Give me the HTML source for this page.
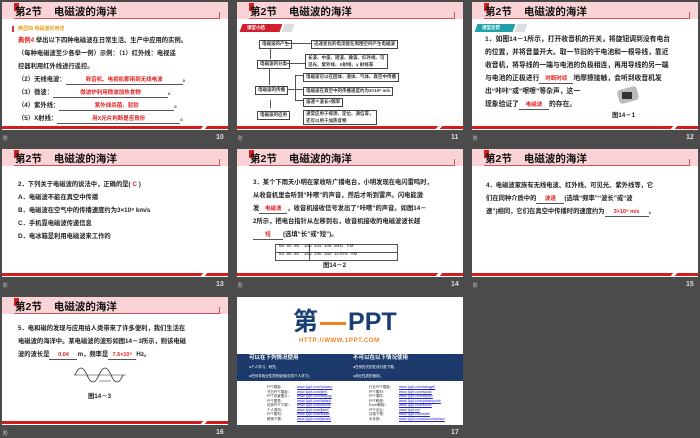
<!DOCTYPE html>
<html><head><meta charset="utf-8"><style>
*{margin:0;padding:0;box-sizing:border-box}
body{width:700px;height:438px;background:#4b4b4b;position:relative;overflow:hidden;font-family:"Liberation Sans","Noto Sans CJK SC",sans-serif}
.s{position:absolute;width:226px;height:128px;background:#fff;overflow:hidden}
.hd{position:absolute;left:0;top:0;width:226px;height:17px;background:#f9d3d6}
.hd .br{position:absolute;left:12px;top:16px;width:206px;height:1px;background:#c55}
.hd .tk{position:absolute;left:217px;top:10px;width:1px;height:7px;background:#c55}
.hd .sq{position:absolute;left:12px;top:1px;width:5px;height:8px;background:#d02020}
.hd .t{position:absolute;left:13px;top:2px;font-size:10.5px;font-weight:bold;color:#111;white-space:nowrap}
.hd .t span{margin-left:12px}
.rb{position:absolute;left:0;bottom:1px;width:226px;height:3px;background:#d41c1c}
.rb i{position:absolute;left:200px;top:-1px;width:4px;height:5px;background:#fff;transform:skewX(-40deg)}
.tx{position:absolute;font-size:6.3px;font-weight:bold;color:#222;line-height:12.5px;white-space:nowrap}
.r{color:#e02020}
.u{display:inline-block;border-bottom:0.7px solid #555;text-align:center;color:#e02020;font-size:5.5px;line-height:7px}
.pn{position:absolute;font-size:7px;font-weight:bold;color:#ddd}
.pl{position:absolute;font-size:5px;color:#ccc}
.bx{position:absolute;border:0.8px solid #444;font-size:4.5px;font-weight:bold;color:#333;padding:0 2px;line-height:6.5px;white-space:nowrap;background:#fff}
.ln{position:absolute;background:#555}
</style></head><body>

<!-- slide 10 -->
<div class="s" style="left:2px;top:2px">
<div class="hd"><div class="sq"></div><div class="t">第2节<span>电磁波的海洋</span></div><div class="br"></div><div class="tk"></div></div>
<div style="position:absolute;left:10px;top:24px;width:2px;height:6px;background:#d33"></div>
<div class="tx" style="left:16px;top:21px;font-size:5px;color:#e8a020">典型四 电磁波的用途</div>
<div class="tx" style="left:16px;top:33px"><span class="r">典例4</span> 举出以下四种电磁波在日常生活、生产中应用的实例。</div>
<div class="tx" style="left:16px;top:46px">（每种电磁波至少各举一例）示例：（1）红外线：电视遥</div>
<div class="tx" style="left:16px;top:59px">控器利用红外线进行遥控。</div>
<div class="tx" style="left:16px;top:72px">（2）无线电波：<span class="u" style="width:117px">收音机、电视机都用到无线电波</span>。</div>
<div class="tx" style="left:16px;top:85px">（3）微波：<span class="u" style="width:115px">微波炉利用微波加热食物</span>。</div>
<div class="tx" style="left:16px;top:98px">（4）紫外线：<span class="u" style="width:115px">紫外线杀菌、验钞</span>。</div>
<div class="tx" style="left:16px;top:111px">（5）X射线：<span class="u" style="width:123px">用X光片判断是否骨折</span>。</div>
<div class="rb"><i></i></div></div>
<div class="pl" style="left:3px;top:135px">阶</div><div class="pn" style="left:216px;top:134px">10</div>

<!-- slide 11 -->
<div class="s" style="left:237px;top:2px">
<div class="hd"><div class="sq"></div><div class="t">第2节<span>电磁波的海洋</span></div><div class="br"></div><div class="tk"></div></div>
<div style="position:absolute;left:4px;top:22px;width:40px;height:8px;background:#d02030;transform:skewX(-20deg)"></div>
<div class="tx" style="left:10px;top:20px;font-size:4.5px;color:#fff">课堂小结</div>
<div style="position:absolute;left:46px;top:22px;width:10px;height:8px;background:#ddd;transform:skewX(-20deg)"></div>
<div class="bx" style="left:22px;top:38px">电磁波的产生</div>
<div class="bx" style="left:20px;top:58px">电磁波的分类</div>
<div class="bx" style="left:18px;top:84px">电磁波的传播</div>
<div class="bx" style="left:20px;top:109px">电磁波的应用</div>
<div class="bx" style="left:74px;top:38px">迅速变化的电流能在周围空间产生电磁波</div>
<div class="bx" style="left:68px;top:52px">长波、中波、短波、微波、红外线、可<br>见光、紫外线、X射线、γ 射线等</div>
<div class="bx" style="left:66px;top:71px">电磁波可以在固体、液体、气体、真空中传播</div>
<div class="bx" style="left:66px;top:85px">电磁波在真空中的传播速度约为3×10⁸ m/s</div>
<div class="bx" style="left:66px;top:96px">波速＝波长×频率</div>
<div class="bx" style="left:66px;top:108px">通常应用于探测、定位、通信等，<br>还可以用于加热食物</div>
<div class="ln" style="left:50px;top:41px;width:24px;height:1px"></div>
<div class="ln" style="left:50px;top:61px;width:18px;height:1px"></div>
<div class="ln" style="left:50px;top:87px;width:16px;height:1px"></div>
<div class="ln" style="left:58px;top:73px;width:1px;height:26px"></div>
<div class="ln" style="left:58px;top:73px;width:8px;height:1px"></div>
<div class="ln" style="left:58px;top:98px;width:8px;height:1px"></div>
<div class="ln" style="left:33px;top:46px;width:1px;height:11px"></div>
<div class="ln" style="left:32px;top:66px;width:1px;height:17px"></div>
<div class="ln" style="left:33px;top:98px;width:1px;height:8px"></div>
<div class="rb"><i></i></div></div>
<div class="pl" style="left:238px;top:135px">阶</div><div class="pn" style="left:451px;top:134px">11</div>

<!-- slide 12 -->
<div class="s" style="left:472px;top:2px">
<div class="hd"><div class="sq"></div><div class="t">第2节<span>电磁波的海洋</span></div><div class="br"></div><div class="tk"></div></div>
<div style="position:absolute;left:4px;top:22px;width:38px;height:8px;background:#20a0a8;transform:skewX(-20deg)"></div>
<div class="tx" style="left:10px;top:20px;font-size:4.5px;color:#fff">课堂反馈</div>
<div style="position:absolute;left:44px;top:22px;width:10px;height:8px;background:#ddd;transform:skewX(-20deg)"></div>
<div class="tx" style="left:13px;top:32px;font-size:6.8px">1．如图14－1所示，打开收音机的开关，将旋钮调到没有电台</div>
<div class="tx" style="left:13px;top:45px;font-size:6.8px">的位置，并将音量开大。取一节旧的干电池和一根导线，靠近</div>
<div class="tx" style="left:13px;top:58px;font-size:6.8px">收音机，将导线的一端与电池的负极相连，再用导线的另一端</div>
<div class="tx" style="left:13px;top:71px;font-size:6.8px">与电池的正极进行<span class="u" style="width:34px">时断时续</span>地摩擦接触，会听到收音机发</div>
<div class="tx" style="left:13px;top:84px;font-size:6.8px">出“咔咔”或“嚓嚓”等杂声，这一</div>
<div class="tx" style="left:13px;top:97px;font-size:6.8px">现象验证了<span class="u" style="width:30px">电磁波</span>的存在。</div>
<div style="position:absolute;left:146px;top:86px;width:20px;height:14px;background:#bbb;border-radius:3px;transform:rotate(-15deg)"></div>
<div style="position:absolute;left:150px;top:90px;width:10px;height:7px;background:#333"></div>
<div class="tx" style="left:140px;top:108px">图14－1</div>
<div class="rb"><i></i></div></div>
<div class="pl" style="left:473px;top:135px">阶</div><div class="pn" style="left:686px;top:134px">12</div>

<!-- slide 13 -->
<div class="s" style="left:2px;top:149px">
<div class="hd"><div class="sq"></div><div class="t">第2节<span>电磁波的海洋</span></div><div class="br"></div><div class="tk"></div></div>
<div class="tx" style="left:16px;top:30px">2．下列关于电磁波的说法中，正确的是(<span class="r"> C </span>  )</div>
<div class="tx" style="left:16px;top:43px">A．电磁波不能在真空中传播</div>
<div class="tx" style="left:16px;top:56px">B．电磁波在空气中的传播速度约为3×10⁸ km/s</div>
<div class="tx" style="left:16px;top:69px">C．手机靠电磁波传递信息</div>
<div class="tx" style="left:16px;top:82px">D．电冰箱是利用电磁波来工作的</div>
<div class="rb"><i></i></div></div>
<div class="pl" style="left:3px;top:282px">阶</div><div class="pn" style="left:216px;top:281px">13</div>

<!-- slide 14 -->
<div class="s" style="left:237px;top:149px">
<div class="hd"><div class="sq"></div><div class="t">第2节<span>电磁波的海洋</span></div><div class="br"></div><div class="tk"></div></div>
<div class="tx" style="left:16px;top:28px">3．某个下雨天小明在家收听广播电台，小明发现在电闪雷鸣时，</div>
<div class="tx" style="left:16px;top:41px">从收音机里会听到“咔嚓”的声音，然后才听到雷声。闪电能激</div>
<div class="tx" style="left:16px;top:54px">发<span class="u" style="width:28px">电磁波</span>，收音机接收信号发出了“咔嚓”的声音。如图14－</div>
<div class="tx" style="left:16px;top:67px">2所示，把电台指针从左移到右，收音机接收的电磁波波长越</div>
<div class="tx" style="left:16px;top:80px"><span class="u" style="width:30px">短</span>(选填“长”或“短”)。</div>
<div style="position:absolute;left:38px;top:95px;width:123px;height:17px;border:0.8px solid #555"></div>
<div class="ln" style="left:38px;top:103px;width:123px;height:1px"></div>
<div class="ln" style="left:72px;top:95px;width:1px;height:17px"></div>
<div class="tx" style="left:42px;top:93px;font-size:4.5px;line-height:8px;font-weight:normal">89 &nbsp;92 &nbsp;96 &nbsp;&nbsp;&nbsp;100 &nbsp;104 &nbsp;108 &nbsp;MHz &nbsp;&nbsp;FM<br>54 &nbsp;80 &nbsp;80 &nbsp;&nbsp;&nbsp;100 &nbsp;140 &nbsp;160 &nbsp;10 kHz &nbsp;AM</div>
<div class="tx" style="left:86px;top:111px">图14－2</div>
<div class="rb"><i></i></div></div>
<div class="pl" style="left:238px;top:282px">阶</div><div class="pn" style="left:451px;top:281px">14</div>

<!-- slide 15 -->
<div class="s" style="left:472px;top:149px">
<div class="hd"><div class="sq"></div><div class="t">第2节<span>电磁波的海洋</span></div><div class="br"></div><div class="tk"></div></div>
<div class="tx" style="left:14px;top:31px">4．电磁波家族有无线电波、红外线、可见光、紫外线等，它</div>
<div class="tx" style="left:14px;top:44px">们在同种介质中的<span class="u" style="width:28px">波速</span>(选填“频率”“波长”或“波</div>
<div class="tx" style="left:14px;top:57px">速”)相同，它们在真空中传播时的速度约为<span class="u" style="width:44px">3×10⁸ m/s</span>。</div>
<div class="rb"><i></i></div></div>
<div class="pl" style="left:473px;top:282px">阶</div><div class="pn" style="left:686px;top:281px">15</div>

<!-- slide 16 -->
<div class="s" style="left:2px;top:297px">
<div class="hd"><div class="sq"></div><div class="t">第2节<span>电磁波的海洋</span></div><div class="br"></div><div class="tk"></div></div>
<div class="tx" style="left:16px;top:26px">5．电和磁的发现与应用给人类带来了许多便利，我们生活在</div>
<div class="tx" style="left:16px;top:39px">电磁波的海洋中。某电磁波的波形如图14－3所示，则该电磁</div>
<div class="tx" style="left:16px;top:52px">波的波长是<span class="u" style="width:28px">0.04</span>m，频率是<span class="u" style="width:28px">7.5×10⁹</span>Hz。</div>
<svg style="position:absolute;left:72px;top:66px" width="52" height="26" viewBox="0 0 52 26"><path d="M1 12 Q7 -2 13 12 T25 12 T37 12 T49 12" fill="none" stroke="#222" stroke-width="0.8"/><path d="M0 12H52" stroke="#222" stroke-width="0.5"/><path d="M25 18H37" stroke="#222" stroke-width="0.5"/></svg>
<div class="tx" style="left:86px;top:94px">图14－3</div>
<div class="rb"><i></i></div></div>
<div class="pl" style="left:3px;top:430px">阶</div><div class="pn" style="left:216px;top:429px">16</div>

<!-- slide 17 -->
<div class="s" style="left:237px;top:297px">
<div style="position:absolute;left:56px;top:11px;font-size:25px;font-weight:bold;color:#1a3f75;white-space:nowrap;line-height:28px">第<span style="display:inline-block;width:26px;height:3px;background:#f08020;vertical-align:middle;margin:0 2px"></span>PPT</div>
<div style="position:absolute;left:62px;top:41px;font-size:6px;font-weight:bold;color:#f08020;letter-spacing:0.6px">HTTP://WWW.1PPT.COM</div>
<div style="position:absolute;left:0;top:57px;width:226px;height:27px;background:#1c3a6b"></div>
<div class="tx" style="left:12px;top:57px;color:#fff;font-size:5.5px;line-height:9px">可以在下列情况使用<br><span style="font-size:3.5px;font-weight:normal">●个人学习、研究。<br>●任何非商业性质的使用(仅供个人学习)</span></div>
<div class="tx" style="left:116px;top:57px;color:#fff;font-size:5.5px;line-height:9px">不可以在以下情况使用<br><span style="font-size:3.5px;font-weight:normal">●任何形式的在线付费下载。<br>●商业性质的使用。</span></div>
<div class="tx" style="left:30px;top:88px;font-size:3.5px;line-height:4.5px;font-weight:normal;color:#333">PPT模板：<br>节日PPT模板：<br>PPT背景图片：<br>PPT图表：<br>优秀PPT下载：<br>个人简历：<br>PPT素材：<br>教案下载：</div>
<div class="tx" style="left:60px;top:88px;font-size:3.5px;line-height:4.5px;font-weight:normal;color:#22c;text-decoration:underline">www.1ppt.com/moban/<br>www.1ppt.com/jieri/<br>www.1ppt.com/beijing/<br>www.1ppt.com/tubiao/<br>www.1ppt.com/xiazai/<br>www.1ppt.com/jianli/<br>www.1ppt.com/sucai/<br>www.1ppt.com/jiaoan/</div>
<div class="tx" style="left:132px;top:88px;font-size:3.5px;line-height:4.5px;font-weight:normal;color:#333">行业PPT模板：<br>PPT素材：<br>PPT课件：<br>PPT教程：<br>Excel教程：<br>PPT论坛：<br>试卷下载：<br>手抄报：</div>
<div class="tx" style="left:162px;top:88px;font-size:3.5px;line-height:4.5px;font-weight:normal;color:#22c;text-decoration:underline">www.1ppt.com/hangye/<br>www.1ppt.com/sucai/<br>www.1ppt.com/kejian/<br>www.1ppt.com/powerpoint/<br>www.1ppt.com/excel/<br>www.1ppt.cn/<br>www.1ppt.com/shiti/<br>www.1ppt.com/shouchaobao/</div>
</div>
<div class="pn" style="left:451px;top:429px">17</div>

</body></html>
